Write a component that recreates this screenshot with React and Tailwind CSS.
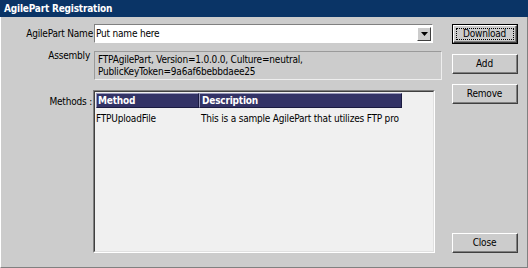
import React from "react";

const font = { fontFamily: "Tahoma, 'DejaVu Sans Condensed', 'Liberation Sans', sans-serif" };

function Btn({ children, def, className = "" }) {
  return (
    <div
      className={`relative h-[20px] w-[66px] bg-[#cccccc] ${def ? "border border-black" : ""} ${className}`}
    >
      <div className="h-full w-full border-t border-l border-t-white border-l-white border-r border-b border-r-[#404040] border-b-[#404040]">
        <div className="flex h-full w-full items-center justify-center border-r border-b border-r-[#808080] border-b-[#808080]">
          <span className="leading-[11px]">{children}</span>
        </div>
      </div>
      {def && <div className="absolute inset-[3px] border border-dotted border-black" />}
    </div>
  );
}

export default function App() {
  return (
    <div
      className="relative h-[268px] w-[528px] overflow-hidden bg-[#cccccc] text-[10px] tracking-[-0.2px] text-black"
      style={font}
    >
      <div className="flex h-[17px] items-center bg-[#0a3466] pl-[4px] font-bold text-white">
        AgilePart Registration
      </div>
      <div className="flex h-[251px] border-l border-l-white border-r border-r-[#808080] border-b border-b-[#808080]">
        <div className="flex w-[450px] flex-col">
          <div className="mt-[7px] flex items-center">
            <div className="w-[93px] pr-[1px] text-right">AgilePart Name</div>
            <div className="flex h-[19px] w-[339px] items-center border border-t-[#808080] border-l-[#808080] border-r-white border-b-white bg-white">
              <span className="flex-1 pl-[1px]">Put name here</span>
              <div className="mr-[1px] flex h-[14px] w-[14px] items-center justify-center border border-t-white border-l-white border-r-[#404040] border-b-[#404040] bg-[#cccccc]">
                <svg width="7" height="4" viewBox="0 0 7 4">
                  <path d="M0 0h7L3.5 4z" fill="#000" />
                </svg>
              </div>
            </div>
          </div>
          <div className="mt-[8px] flex items-start">
            <div className="-mt-[3px] w-[89px] text-right">Assembly</div>
            <div className="ml-[4px] h-[29px] w-[348px] border border-t-[#9a9a9a] border-l-[#9a9a9a] border-r-[#eeeeee] border-b-[#eeeeee] pl-[3px] pt-[2px] leading-[12px]">
              <div>FTPAgilePart, Version=1.0.0.0, Culture=neutral,</div>
              <div>PublicKeyToken=9a6af6bebbdaee25</div>
            </div>
          </div>
          <div className="mt-[10px] flex items-start">
            <div className="mt-[4px] w-[93px] pr-[2px] text-right">Methods :</div>
            <div className="-ml-[1px] h-[163px] w-[342px] border border-t-[#808080] border-l-[#808080] border-r-white border-b-white bg-[#f0f0f0]">
              <div className="h-full w-full border border-t-[#404040] border-l-[#404040] border-r-[#e0e0e0] border-b-[#e0e0e0] p-[1px]">
                <div className="flex h-[15px] w-[306px] font-bold text-white">
                  <div className="flex w-[103px] items-center border border-t-[#9999bb] border-l-[#9999bb] border-r-[#1a1a40] border-b-[#1a1a40] bg-[#333366] pl-[1px]">
                    Method
                  </div>
                  <div className="flex flex-1 items-center border border-t-[#9999bb] border-l-[#9999bb] border-r-[#1a1a40] border-b-[#1a1a40] bg-[#333366] pl-[2px]">
                    Description
                  </div>
                </div>
                <div className="mt-[3px] flex">
                  <div className="w-[103px]">FTPUploadFile</div>
                  <div className="pl-[2px] whitespace-nowrap">This is a sample AgilePart that utilizes FTP pro</div>
                </div>
              </div>
            </div>
          </div>
        </div>
        <div className="flex flex-col pl-[1px]">
          <Btn def className="mt-[7px]">Download</Btn>
          <Btn className="mt-[10px]">Add</Btn>
          <Btn className="mt-[10px]">Remove</Btn>
          <Btn className="mt-auto mb-[14px]">Close</Btn>
        </div>
      </div>
    </div>
  );
}
